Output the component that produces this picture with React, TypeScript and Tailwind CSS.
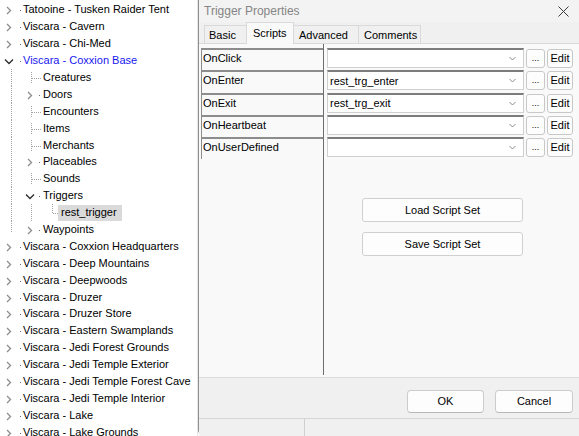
import React from "react";

type Kind = "collapsed" | "expanded" | "leaf";
type TreeNode = {
  label: string;
  level: 0 | 1 | 2;
  kind: Kind;
  blue?: boolean;
  selected?: boolean;
  last?: boolean;
};

const top = (label: string): TreeNode => ({ label, level: 0, kind: "collapsed" });

const nodes: TreeNode[] = [
  top("Tatooine - Tusken Raider Tent"),
  top("Viscara - Cavern"),
  top("Viscara - Chi-Med"),
  { label: "Viscara - Coxxion Base", level: 0, kind: "expanded", blue: true },
  { label: "Creatures", level: 1, kind: "leaf" },
  { label: "Doors", level: 1, kind: "collapsed" },
  { label: "Encounters", level: 1, kind: "leaf" },
  { label: "Items", level: 1, kind: "leaf" },
  { label: "Merchants", level: 1, kind: "leaf" },
  { label: "Placeables", level: 1, kind: "collapsed" },
  { label: "Sounds", level: 1, kind: "leaf" },
  { label: "Triggers", level: 1, kind: "expanded" },
  { label: "rest_trigger", level: 2, kind: "leaf", selected: true },
  { label: "Waypoints", level: 1, kind: "collapsed", last: true },
  top("Viscara - Coxxion Headquarters"),
  top("Viscara - Deep Mountains"),
  top("Viscara - Deepwoods"),
  top("Viscara - Druzer"),
  top("Viscara - Druzer Store"),
  top("Viscara - Eastern Swamplands"),
  top("Viscara - Jedi Forest Grounds"),
  top("Viscara - Jedi Temple Exterior"),
  top("Viscara - Jedi Temple Forest Cave"),
  top("Viscara - Jedi Temple Interior"),
  top("Viscara - Lake"),
  top("Viscara - Lake Grounds"),
];

const LINE = "#a3a3a3";

function Guides({ n }: { n: TreeNode }) {
  const w = n.level === 0 ? 23 : n.level === 1 ? 43 : 58;
  const cx = n.level === 0 ? 7 : 28; // chevron x
  const dotX = n.level === 0 ? 20 : 39;
  return (
    <svg width={w} height={17} className="shrink-0 overflow-visible">
      {/* parent's child line */}
      {n.level >= 1 && (
        <line x1={11.5} x2={11.5} y1={0} y2={n.last ? 12 : 17} stroke={LINE} strokeDasharray="1 1" />
      )}
      {n.level === 2 && (
        <>
          <line x1={31.5} x2={31.5} y1={0} y2={17} stroke={LINE} strokeDasharray="1 1" />
          <line x1={52.5} x2={52.5} y1={0} y2={10} stroke={LINE} strokeDasharray="1 1" />
          <line x1={53} x2={58} y1={9.5} y2={9.5} stroke={LINE} strokeDasharray="1 1" />
        </>
      )}
      {n.level === 1 && n.kind === "leaf" && (
        <>
          <line x1={31.5} x2={31.5} y1={3} y2={15} stroke={LINE} strokeDasharray="1 1" />
          <line x1={32} x2={42} y1={9.5} y2={9.5} stroke={LINE} strokeDasharray="1 1" />
        </>
      )}
      {n.kind === "collapsed" && (
        <>
          <polyline
            points={`${cx},6 ${cx + 3.5},9.5 ${cx},13`}
            fill="none"
            stroke="#8c8c8c"
            strokeWidth={1.3}
          />
          <rect x={dotX} y={9} width={1} height={1} fill="#6f6f6f" />
        </>
      )}
      {n.kind === "expanded" && (
        <>
          <polyline
            points={`${cx - 2},7.5 ${cx + 2},11.5 ${cx + 6},7.5`}
            fill="none"
            stroke="#2b2b2b"
            strokeWidth={1.3}
          />
          <rect x={dotX} y={9} width={1} height={1} fill="#6f6f6f" />
        </>
      )}
    </svg>
  );
}

function TreeRow({ n }: { n: TreeNode }) {
  return (
    <div className="flex h-[16.9px] items-center whitespace-nowrap">
      <Guides n={n} />
      {n.selected ? (
        <span className="flex h-[16px] items-center bg-[#dadada] pl-[3px] pr-[5px]">{n.label}</span>
      ) : (
        <span className={n.blue ? "text-[#1717f0]" : ""}>{n.label}</span>
      )}
    </div>
  );
}

const events = [
  { name: "OnClick", value: "" },
  { name: "OnEnter", value: "rest_trg_enter" },
  { name: "OnExit", value: "rest_trg_exit" },
  { name: "OnHeartbeat", value: "" },
  { name: "OnUserDefined", value: "" },
];

function Chevron() {
  return (
    <svg width={7} height={5} viewBox="0 0 7 5">
      <polyline points="0.5,1 3.5,4 6.5,1" fill="none" stroke="#8a8a8a" strokeWidth={1} />
    </svg>
  );
}

export default function App() {
  return (
    <div className="flex h-[436px] w-[579px] overflow-hidden bg-white font-['Liberation_Sans',Arial,sans-serif] text-[11px] leading-none text-black">
      {/* Area tree */}
      <div className="w-[198px] shrink-0 border-r border-[#e6e6e6] pt-[1.5px]">
        {nodes.map((n) => (
          <TreeRow key={n.label} n={n} />
        ))}
      </div>

      {/* Trigger Properties dialog */}
      <div className="flex min-w-0 flex-1 flex-col rounded-bl-[6px] border-l border-[#8f8f8f] bg-[#f0f0f0]">
        {/* Title bar */}
        <div className="flex h-[22px] shrink-0 items-center justify-between bg-[#f3f3f3] pl-[5px] pr-[10px] text-[12px] text-[#858585]">
          <span>Trigger Properties</span>
          <svg width={11} height={11} viewBox="0 0 11 11">
            <path d="M0.5 0.5 L10.5 10.5 M10.5 0.5 L0.5 10.5" stroke="#3a3a3a" strokeWidth={1} />
          </svg>
        </div>

        {/* Tabs */}
        <div className="flex h-[22px] shrink-0 items-end border-b border-[#d9d9d9] pl-[5px]">
          <div className="flex h-[18px] w-[42px] items-center border-l border-t border-[#d9d9d9] pl-[4px] pt-[2px]">
            Basic
          </div>
          <div className="relative z-10 mb-[-1px] flex h-[22px] w-[48px] items-center border-l border-r border-t border-[#d9d9d9] bg-[#f9f9f9] pb-[1px] pl-[6px]">
            Scripts
          </div>
          <div className="flex h-[18px] w-[65px] items-center border-r border-t border-[#d9d9d9] pl-[5px] pt-[2px]">
            Advanced
          </div>
          <div className="flex h-[18px] w-[62px] items-center border-r border-t border-[#d9d9d9] pl-[5px] pt-[2px]">
            Comments
          </div>
        </div>

        {/* Scripts page */}
        <div className="flex min-h-0 flex-1 bg-[#f9f9f9] pb-[2px]">
          <div className="w-[125px] shrink-0 border-r border-[#6e6e6e] pl-[2px] pt-[4px]">
            {events.map((e) => (
              <div
                key={e.name}
                className="h-[22.25px] border-l border-t-2 border-[#8c8c8c] pl-[1px] pt-[2px] text-[11px] leading-[13px]"
              >
                {e.name}
              </div>
            ))}
          </div>

          <div className="flex flex-1 flex-col pl-[3px] pt-[4px]">
            {events.map((e) => (
              <div key={e.name} className="flex h-[22.25px] items-start gap-[2px]">
                <div className="flex h-[20px] w-[197px] items-center justify-between border border-[#d0d0d0] border-t-2 border-t-[#7c7c7c] bg-white pl-[2px] pr-[7px]">
                  <span className="pt-[1px]">{e.value}</span>
                  <Chevron />
                </div>
                <div className="mt-[1px] flex h-[19px] w-[19px] items-end justify-center rounded-[3px] border border-[#c8c8c8] bg-[#fdfdfd] pb-[4px] text-[9px]">
                  ...
                </div>
                <div className="mt-[1px] flex h-[19px] w-[26px] items-center justify-center rounded-[3px] border border-[#c8c8c8] bg-[#fdfdfd]">
                  Edit
                </div>
              </div>
            ))}

            <div className="ml-[35px] mt-[39px] flex h-[24px] w-[161px] items-center justify-center rounded-[3px] border border-[#d0d0d0] bg-[#fdfdfd]">
              Load Script Set
            </div>
            <div className="ml-[35px] mt-[10px] flex h-[24px] w-[161px] items-center justify-center rounded-[3px] border border-[#d0d0d0] bg-[#fdfdfd]">
              Save Script Set
            </div>
          </div>
        </div>

        {/* Footer buttons */}
        <div className="flex h-[41px] shrink-0 items-start justify-end gap-[11px] border-t border-[#dcdcdc] bg-[#f0f0f0] pr-[6px] pt-[12px]">
          <div className="flex h-[23px] w-[77px] items-center justify-center rounded-[4px] border border-[#cccccc] border-b-[#b8b8b8] bg-[#fdfdfd]">
            OK
          </div>
          <div className="flex h-[23px] w-[78px] items-center justify-center rounded-[4px] border border-[#cccccc] border-b-[#b8b8b8] bg-[#fdfdfd]">
            Cancel
          </div>
        </div>

        {/* Status strip */}
        <div className="flex h-[18px] shrink-0 border-t border-[#d6d6d6] bg-[#f0f0f0]">
          <div className="w-[106px] border-r border-[#cfcfcf]" />
        </div>
      </div>
    </div>
  );
}
